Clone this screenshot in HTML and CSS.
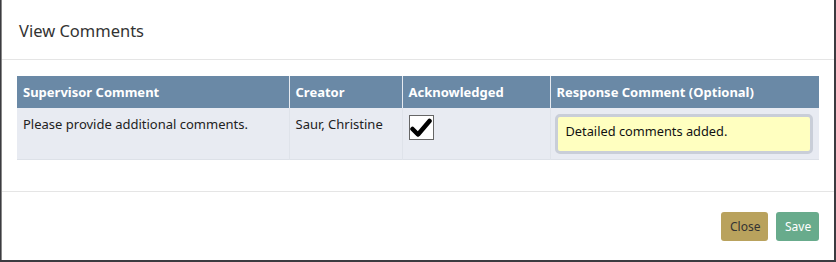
FILE: index.html
```html
<!DOCTYPE html>
<html lang="en">

<head>
    <meta charset="UTF-8">
    <meta name="viewport" content="width=device-width, initial-scale=1.0">
    <title>View Comments</title>
    <link rel="stylesheet" href="styles.css">
</head>

<body>
    <div class="modal">
        <div class="modal-header">
            <h4 class="modal-title">View Comments</h4>
        </div>
        <div class="modal-body">
            <table class="comments">
                <colgroup>
                    <col class="col-comment">
                    <col class="col-creator">
                    <col class="col-ack">
                    <col class="col-response">
                </colgroup>
                <thead>
                    <tr>
                        <th>Supervisor Comment</th>
                        <th>Creator</th>
                        <th>Acknowledged</th>
                        <th>Response Comment (Optional)</th>
                    </tr>
                </thead>
                <tbody>
                    <tr>
                        <td>Please provide additional comments.</td>
                        <td>Saur, Christine</td>
                        <td>
                            <span class="check">
                                <svg width="22" height="20" viewBox="0 0 22 20">
                                    <path d="M2.5 11 L8 16.5 L19.5 3" fill="none" stroke="#000" stroke-width="4.5" stroke-linecap="round" stroke-linejoin="round" />
                                </svg>
                            </span>
                        </td>
                        <td>
                            <div class="response">Detailed comments added.</div>
                        </td>
                    </tr>
                </tbody>
            </table>
        </div>
        <div class="modal-footer">
            <button class="btn btn-close">Close</button>
            <button class="btn btn-save">Save</button>
        </div>
    </div>
</body>

</html>
```

FILE: styles.css
```css
* {
    box-sizing: border-box;
}

body {
    margin: 0;
    background: #3b3b40;
    font-family: "Noto Sans", "Open Sans", sans-serif;
    color: #333;
}

.modal {
    margin: 0 2px 0 1px;
    height: 260px;
    background: #fff;
    border-left: 1px solid #888;
    display: flex;
    flex-direction: column;
}

.modal-header {
    height: 60px;
    padding: 2px 17px 0 17px;
    border-bottom: 1px solid #e5e5e5;
    display: flex;
    align-items: center;
}

.modal-title {
    margin: 0;
    font-size: 16.5px;
    font-weight: normal;
    color: #333;
}

.modal-body {
    padding: 16px 14px 0 15px;
    height: 132px;
    border-bottom: 1px solid #e5e5e5;
}

.comments {
    width: 802px;
    border-collapse: collapse;
    font-size: 13px;
    table-layout: fixed;
}

.col-comment {
    width: 272px;
}

.col-creator {
    width: 113px;
}

.col-ack {
    width: 148px;
}

.col-response {
    width: 269px;
}

.comments th {
    height: 32px;
    padding: 0 6px;
    background: #6a89a6;
    color: #fff;
    text-align: left;
    font-weight: bold;
    border-left: 1px solid #e6eaf0;
}

.comments td {
    height: 51px;
    padding: 6px 6px 0 6px;
    vertical-align: top;
    background: #e8ebf2;
    color: #222;
    border-left: 1px solid #dfe3ea;
    line-height: 20px;
}

.comments th:first-child,
.comments td:first-child {
    border-left: none;
}

.comments tbody tr {
    border-bottom: 1px solid #dde1e8;
}

.check {
    margin-top: 1px;
    width: 25px;
    height: 25px;
    border: 1px solid #666;
    background: #fff;
    display: flex;
    align-items: center;
    justify-content: center;
}

.response {
    margin-left: -2px;
    width: 258px;
    height: 40px;
    padding: 4px 8px;
    background: #ffffc0;
    border: 3px solid #c9ced8;
    border-radius: 5px;
    font-size: 12.8px;
    color: #111;
}

.modal-footer {
    padding: 20px 15px 0 0;
    display: flex;
    justify-content: flex-end;
    gap: 8px;
}

.btn {
    height: 29px;
    padding: 0 9px;
    border: none;
    border-radius: 3px;
    font-family: "Noto Sans", "Open Sans", sans-serif;
    font-size: 12px;
    cursor: pointer;
}

.btn-close {
    width: 47px;
    background: #b9a25d;
    color: #333;
}

.btn-save {
    width: 43px;
    background: #68ab8c;
    color: #fff;
}
```
